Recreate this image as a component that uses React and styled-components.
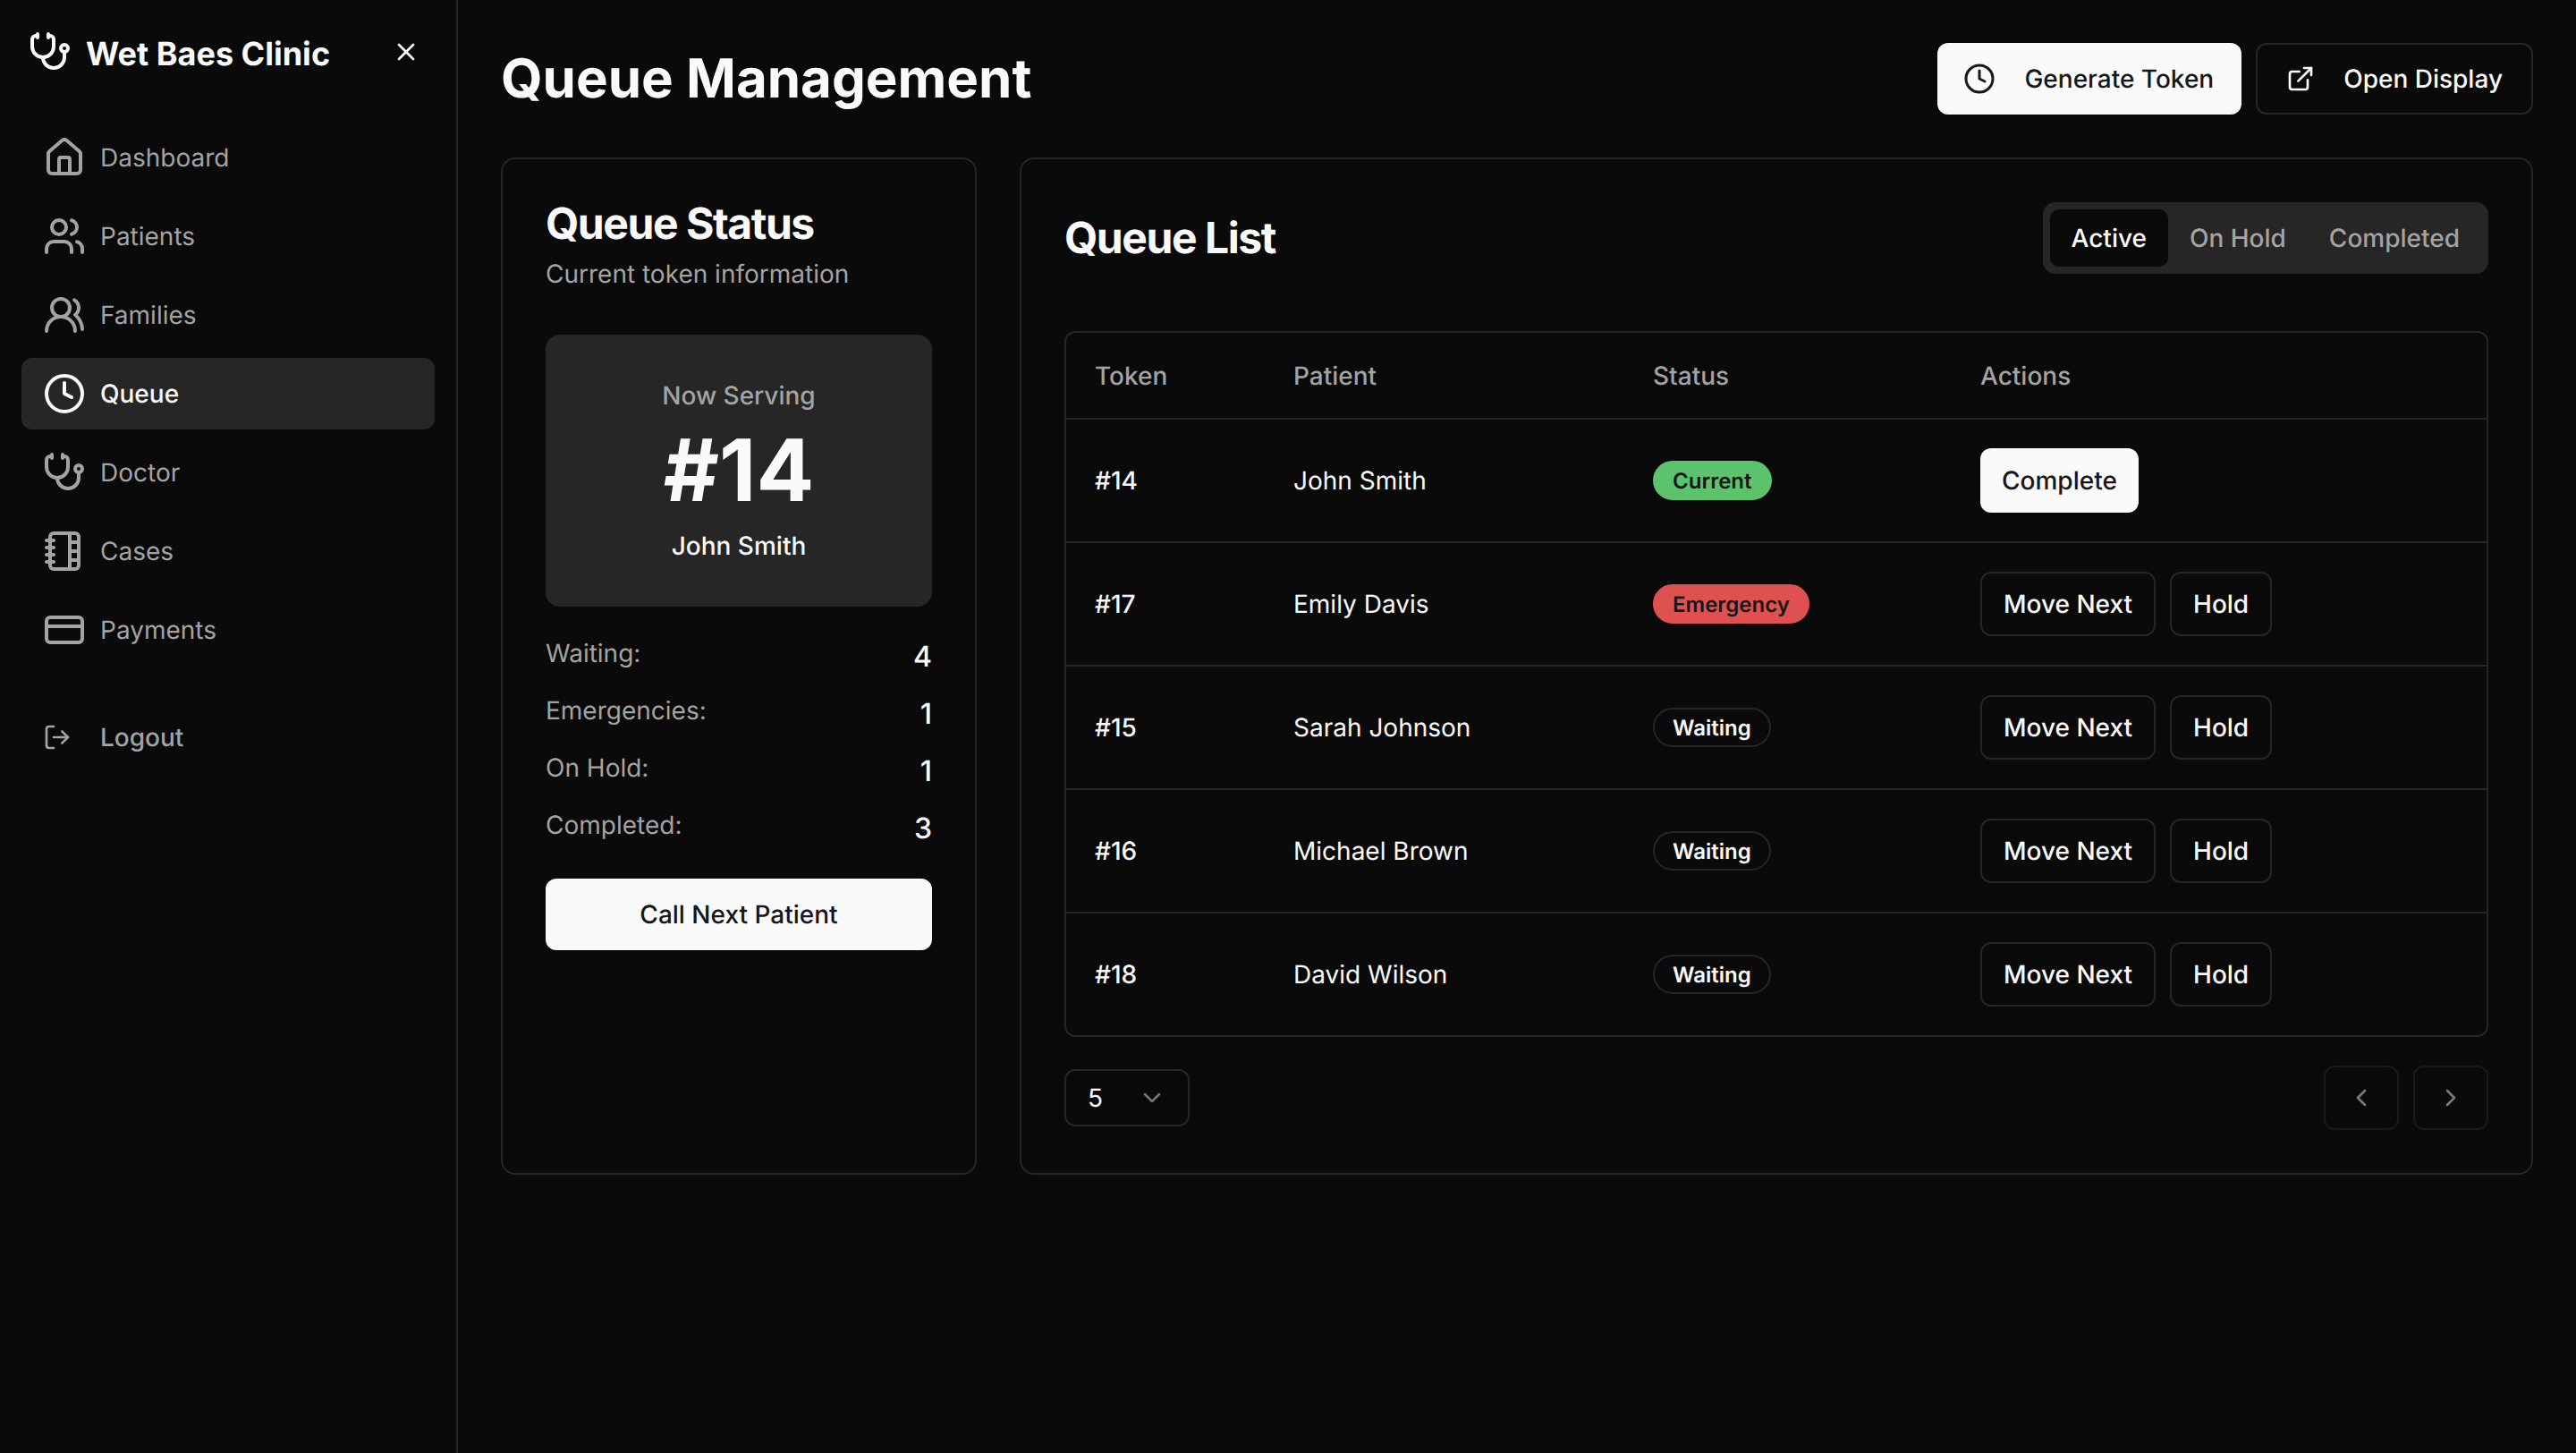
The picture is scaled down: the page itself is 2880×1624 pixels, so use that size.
import React from 'react';
import styled, { createGlobalStyle } from 'styled-components';
import { House, Users, UsersRound, Clock, Stethoscope, NotebookTabs, CreditCard, LogOut, X, ExternalLink, ChevronDown, ChevronLeft, ChevronRight } from 'lucide-react';

const Global = createGlobalStyle`
  * { box-sizing: border-box; }
  html, body { margin: 0; background: #0a0a0a; }
  body { font-family: Inter, "Liberation Sans", sans-serif; color: #fafafa; font-size: 28px; text-rendering: geometricPrecision; }
  button { font-family: inherit; text-rendering: inherit; }
`;
const Page = styled.div`display: flex; min-height: 1624px; background: #0a0a0a;`;
const Sidebar = styled.aside`width: 512px; flex: none; border-right: 2px solid #262626; display: flex; flex-direction: column;`;
const Brand = styled.div`height: 116px; padding: 0 40px 0 32px; display: flex; align-items: center; justify-content: space-between;`;
const BrandLeft = styled.div`display: flex; align-items: center; gap: 16px;`;
const BrandName = styled.span`font-size: 36px; font-weight: 700; line-height: 48px; margin-top: 4px;`;
const CloseButton = styled.button`background: none; border: 0; padding: 0; color: #fafafa; display: flex;`;
const Nav = styled.nav`padding: 20px 24px 0; display: flex; flex-direction: column; gap: 8px;`;
const NavItem = styled.a`
  height: 80px; padding: 0 24px; border-radius: 12px; display: flex; align-items: center; gap: ${p => p.$logout ? 32 : 16}px;
  font-size: 28px; font-weight: ${p => p.$logout || p.$active ? 500 : 400}; color: ${p => p.$active ? '#fafafa' : '#a3a3a3'};
  background: ${p => p.$active ? '#262626' : 'transparent'};
  margin-top: ${p => p.$logout ? 32 : 0}px;
`;
const Main = styled.main`flex: 1; padding: 48px; min-width: 0;`;
const TopBar = styled.header`display: flex; align-items: center; justify-content: space-between; height: 80px; margin-bottom: 48px;`;
const PageTitle = styled.h1`margin: 0; font-size: 60px; line-height: 72px; font-weight: 700;`;
const TopActions = styled.div`display: flex; gap: 16px;`;
const TopButton = styled.button`
  height: 80px; padding: ${p => p.$primary ? '0 31px 0 29px' : '0 32px'}; border-radius: 12px; display: flex; align-items: center; gap: 32px;
  font-size: 28px; font-weight: 500;
  border: ${p => p.$primary ? '0' : '2px solid #262626'};
  background: ${p => p.$primary ? '#fafafa' : '#0a0a0a'};
  color: ${p => p.$primary ? '#171717' : '#fafafa'};
`;
const Columns = styled.div`display: grid; grid-template-columns: 532px 1fr; gap: 48px;`;
const Card = styled.section`border: 2px solid #262626; border-radius: 16px; padding: 48px; min-height: 1136px;`;
const CardTitle = styled.h2`margin: 0; font-size: 48px; line-height: 48px; font-weight: 700; letter-spacing: -1.44px;`;
const CardSub = styled.p`margin: 16px 0 0; font-size: 28px; line-height: 32px; color: #a3a3a3;`;
const ServingBox = styled.div`margin-top: 52px; height: 304px; border-radius: 16px; background: #262626; padding: 48px 0; text-align: center;`;
const ServingLabel = styled.div`font-size: 28px; line-height: 40px; font-weight: 500; color: #a3a3a3;`;
const ServingToken = styled.div`margin: 16px 0; font-size: 96px; line-height: 96px; font-weight: 700;`;
const ServingName = styled.div`font-size: 28px; line-height: 40px; font-weight: 500;`;
const Stats = styled.dl`margin: 36px 0 0; display: flex; flex-direction: column; gap: 24px;`;
const StatRow = styled.div`display: flex; justify-content: space-between; align-items: flex-start;`;
const StatLabel = styled.dt`font-size: 28px; line-height: 32px; color: #a3a3a3;`;
const StatValue = styled.dd`margin: 0; font-size: 32px; line-height: 40px; font-weight: 500;`;
const CallButton = styled.button`
  margin-top: 36px; width: 100%; height: 80px; border: 0; border-radius: 12px; background: #fafafa; color: #171717;
  font-size: 28px; font-weight: 500;
`;
const ListHead = styled.div`display: flex; justify-content: space-between; align-items: center; margin-bottom: 64px;`;
const Tabs = styled.div`height: 80px; padding: 8px; border-radius: 14px; background: #262626; display: flex; gap: 0;`;
const Tab = styled.button`
  height: 64px; padding: 0 24px; border: 0; border-radius: 10px; font-size: 28px; font-weight: 500;
  background: ${p => p.$active ? '#0a0a0a' : 'transparent'}; color: ${p => p.$active ? '#fafafa' : '#a3a3a3'};
`;
const TableBox = styled.div`border: 2px solid #262626; border-radius: 12px;`;
const Row = styled.div`
  display: grid; grid-template-columns: 222px 402px 366px 1fr; align-items: center; padding-left: 32px;
  height: ${p => p.$head ? 95 : 136}px; font-weight: ${p => p.$head ? 500 : 400}; font-size: 28px;
  color: ${p => p.$head ? '#a3a3a3' : '#fafafa'};
  box-sizing: content-box;
  & + & { border-top: 2px solid #262626; }
`;
const TokenCell = styled.span`font-weight: 500;`;
const Badge = styled.span`
  display: inline-flex; align-items: center; height: 44px; padding: 0 20px; border-radius: 22px; font-size: 24px; font-weight: 600;
  border: 2px solid ${p => p.$bg || '#262626'}; background: ${p => p.$bg || 'transparent'};
  color: ${p => p.$bg ? '#171717' : '#fafafa'};
`;
const Actions = styled.div`display: flex; gap: 16px;`;
const RowButton = styled.button`
  height: 72px; padding: 0 24px; border-radius: 12px; font-size: 28px; font-weight: 500;
  border: ${p => p.$primary ? '0' : '2px solid #262626'};
  background: ${p => p.$primary ? '#fafafa' : '#0a0a0a'};
  color: ${p => p.$primary ? '#171717' : '#fafafa'};
`;
const Footer = styled.div`margin-top: 32px; display: flex; justify-content: space-between; align-items: center;`;
const PageSize = styled.div`
  width: 140px; height: 64px; border: 2px solid #262626; border-radius: 12px; padding: 0 24px; display: flex; align-items: center;
  justify-content: space-between; font-size: 28px; color: #fafafa;
`;
const Pager = styled.div`display: flex; gap: 16px;`;
const PagerButton = styled.button`
  width: 84px; height: 72px; border: 2px solid #1a1a1a; border-radius: 12px; background: #0a0a0a; color: #7a7a7a;
  display: flex; align-items: center; justify-content: center; padding: 0;
`;

const nav = [
  ['Dashboard', House], ['Patients', Users], ['Families', UsersRound], ['Queue', Clock, true],
  ['Doctor', Stethoscope], ['Cases', NotebookTabs], ['Payments', CreditCard],
];
const stats = [['Waiting:', 4], ['Emergencies:', 1], ['On Hold:', 1], ['Completed:', 3]];
const rows = [
  ['#14', 'John Smith', 'Current', '#5cc26c'], ['#17', 'Emily Davis', 'Emergency', '#df5150'],
  ['#15', 'Sarah Johnson', 'Waiting'], ['#16', 'Michael Brown', 'Waiting'], ['#18', 'David Wilson', 'Waiting'],
];

export default function App() {
  return (
    <Page>
      <Global />
      <Sidebar>
        <Brand>
          <BrandLeft><Stethoscope size={48} /><BrandName>Wet Baes Clinic</BrandName></BrandLeft>
          <CloseButton aria-label="Close"><X size={32} /></CloseButton>
        </Brand>
        <Nav>
          {nav.map(([label, Icon, active]) => (
            <NavItem key={label} $active={active}><Icon size={48} />{label}</NavItem>
          ))}
          <NavItem $logout><LogOut size={32} />Logout</NavItem>
        </Nav>
      </Sidebar>
      <Main>
        <TopBar>
          <PageTitle>Queue Management</PageTitle>
          <TopActions>
            <TopButton $primary><Clock size={36} />Generate Token</TopButton>
            <TopButton><ExternalLink size={32} />Open Display</TopButton>
          </TopActions>
        </TopBar>
        <Columns>
          <Card>
            <CardTitle>Queue Status</CardTitle>
            <CardSub>Current token information</CardSub>
            <ServingBox>
              <ServingLabel>Now Serving</ServingLabel>
              <ServingToken>#14</ServingToken>
              <ServingName>John Smith</ServingName>
            </ServingBox>
            <Stats>
              {stats.map(([l, v]) => <StatRow key={l}><StatLabel>{l}</StatLabel><StatValue>{v}</StatValue></StatRow>)}
            </Stats>
            <CallButton>Call Next Patient</CallButton>
          </Card>
          <Card>
            <ListHead>
              <CardTitle>Queue List</CardTitle>
              <Tabs><Tab $active>Active</Tab><Tab>On Hold</Tab><Tab>Completed</Tab></Tabs>
            </ListHead>
            <TableBox>
              <Row $head><span>Token</span><span>Patient</span><span>Status</span><span>Actions</span></Row>
              {rows.map(([t, n, s, c]) => (
                <Row key={t}>
                  <TokenCell>{t}</TokenCell><span>{n}</span>
                  <span><Badge $bg={c}>{s}</Badge></span>
                  <Actions>
                    {s === 'Current' ? <RowButton $primary>Complete</RowButton> : <><RowButton>Move Next</RowButton><RowButton>Hold</RowButton></>}
                  </Actions>
                </Row>
              ))}
            </TableBox>
            <Footer>
              <PageSize>5<ChevronDown size={32} color="#737373" /></PageSize>
              <Pager>
                <PagerButton aria-label="Previous"><ChevronLeft size={32} /></PagerButton>
                <PagerButton aria-label="Next"><ChevronRight size={32} /></PagerButton>
              </Pager>
            </Footer>
          </Card>
        </Columns>
      </Main>
    </Page>
  );
}
